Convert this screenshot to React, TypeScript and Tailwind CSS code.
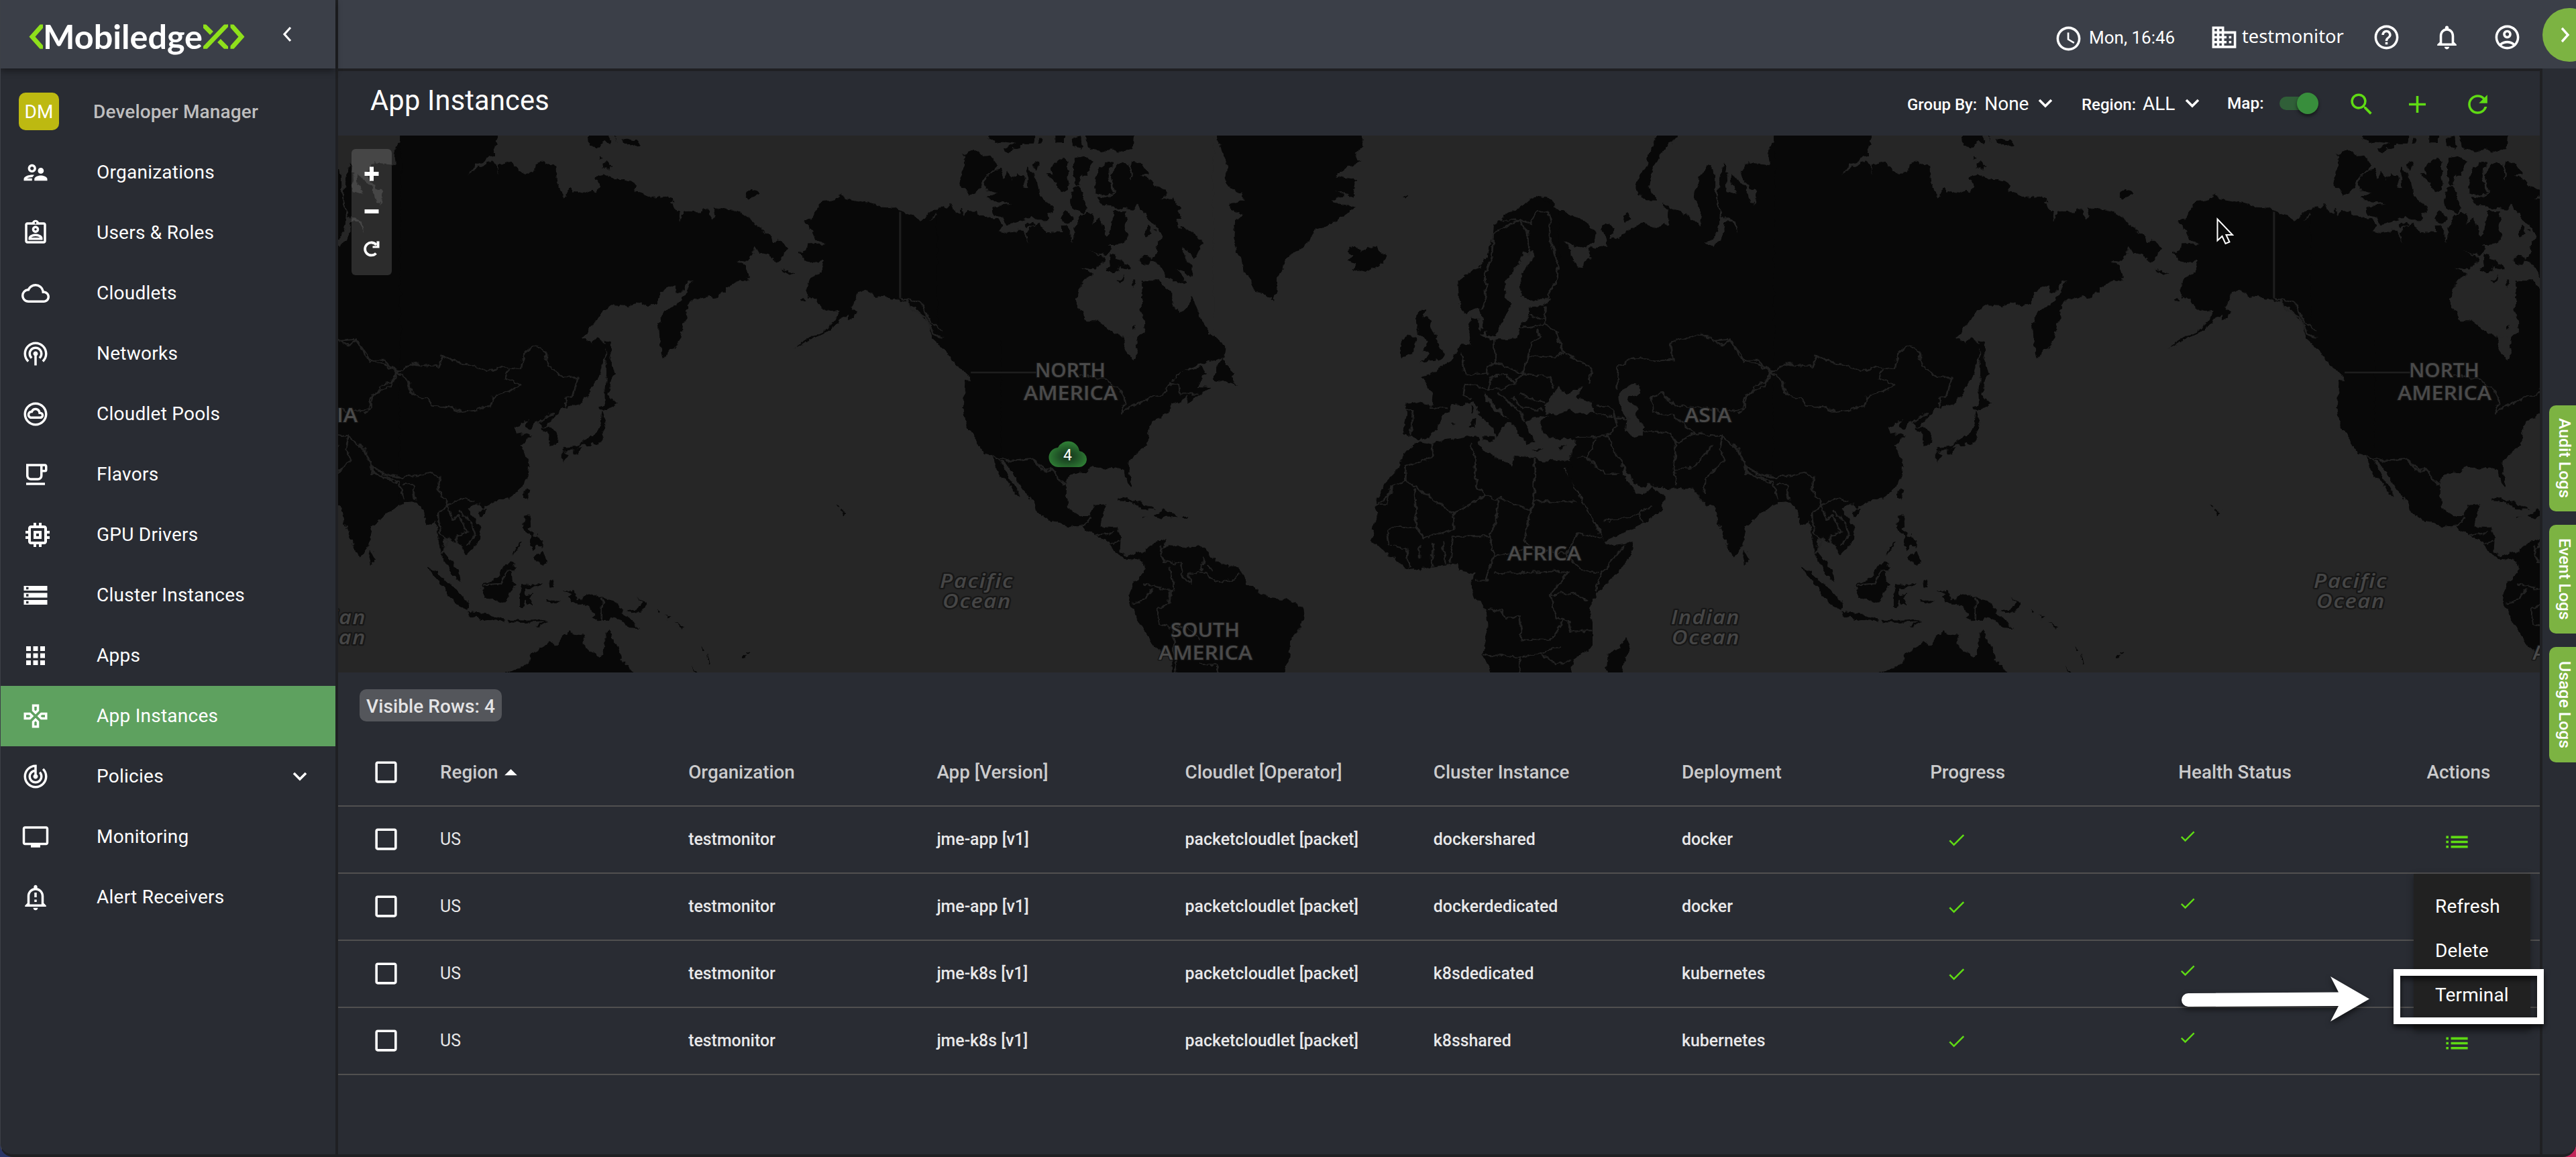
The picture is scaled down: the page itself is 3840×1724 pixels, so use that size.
import React from "react";
import {
  MdAccessTime,
  MdAdd,
  MdApps,
  MdArrowDropUp,
  MdBusiness,
  MdCheck,
  MdCheckBoxOutlineBlank,
  MdCloudQueue,
  MdHelpOutline,
  MdList,
  MdMemory,
  MdNotificationsNone,
  MdOutlineAccountCircle,
  MdOutlineAssignmentInd,
  MdOutlineCloudCircle,
  MdOutlineFreeBreakfast,
  MdOutlineGamepad,
  MdOutlineNotificationImportant,
  MdOutlineSupervisorAccount,
  MdOutlineTv,
  MdPodcasts,
  MdRefresh,
  MdSearch,
  MdStorage,
  MdTrackChanges,
} from "react-icons/md";

const LAND = "#080808";
const WATER = "#262626";

/* ---------- World map ---------- */

const eastLand = [
  "M140,-10 L345,-10 L345,28 L336,70 L320,92 L300,105 L282,133 L305,112 L335,95 L345,104 L344,138 L348,104 L372,95 L385,112 L388,125 L404,130 L422,125 L425,102 L436,98 L455,105 L468,112 L470,150 L478,180 L487,203 L497,170 L505,185 L520,180 L530,186 L545,178 L555,185 L562,170 L553,140 L570,135 L600,148 L628,152 L640,162 L636,178 L652,185 L665,200 L700,195 L715,205 L722,235 L730,245 L733,270 L738,240 L775,242 L780,232 L790,232 L800,265 L808,255 L805,230 L850,235 L880,260 L905,290 L925,310 L930,330 L945,320 L962,345 L952,362 L940,387 L920,362 L900,358 L890,340 L885,365 L878,380 L850,378 L870,392 L878,435 L860,432 L830,460 L805,488 L795,482 L760,490 L745,510 L748,545 L738,570 L735,600 L722,625 L712,635 L697,662 L690,620 L687,560 L700,525 L735,490 L762,432 L752,435 L735,470 L724,475 L722,452 L706,452 L690,475 L682,500 L668,512 L650,498 L620,508 L585,507 L568,528 L540,575 L525,597 L545,615 L555,600 L575,618 L572,650 L563,700 L545,745 L520,790 L500,795 L482,800 L455,840 L448,850 L460,855 L472,875 L470,905 L452,908 L454,880 L440,860 L440,848 L428,838 L412,862 L403,850 L413,826 L395,845 L380,852 L385,870 L415,878 L393,905 L402,925 L412,965 L410,990 L392,1030 L370,1055 L345,1064 L322,1075 L315,1087 L308,1073 L290,1078 L280,1090 L305,1130 L310,1168 L298,1190 L278,1217 L268,1190 L250,1178 L240,1168 L232,1168 L228,1205 L245,1235 L262,1262 L267,1295 L248,1280 L235,1240 L222,1205 L218,1160 L212,1120 L205,1130 L195,1136 L187,1095 L172,1068 L150,1070 L135,1075 Z",
  "M574,608 L584,612 L586,680 L596,700 L584,715 L582,745 L577,772 L573,770 L576,700 Z",
  "M572,750 L590,778 L602,788 L582,795 L578,805 L564,803 L562,795 L573,785 Z",
  "M567,806 L575,840 L567,865 L567,892 L558,903 L548,896 L540,908 L525,903 L515,915 L498,918 L482,926 L484,912 L515,908 L532,890 L540,878 L548,880 L558,862 L564,840 Z",
  "M480,925 L494,930 L488,955 L480,945 Z",
  "M505,918 L524,912 L514,930 L505,930 Z",
  "M405,1028 L411,1032 L406,1064 L399,1050 Z",
  "M306,1093 L320,1086 L318,1104 L308,1108 Z",
  "M403,1106 L416,1106 L413,1140 L422,1165 L405,1155 L398,1135 Z",
  "M415,1165 L428,1160 L438,1180 L440,1200 L430,1190 L420,1205 L412,1190 Z",
  "M420,1225 L434,1215 L440,1206 L449,1235 L445,1246 L436,1240 L428,1240 Z",
  "M393,1180 L396,1182 L380,1215 L377,1215 Z",
  "M308,1300 L325,1296 L345,1278 L362,1243 L372,1240 L388,1254 L374,1262 L376,1290 L382,1300 L372,1320 L365,1350 L350,1352 L330,1342 L318,1340 Z",
  "M195,1252 L215,1262 L235,1290 L255,1315 L275,1345 L282,1350 L280,1375 L258,1358 L235,1320 L210,1280 Z",
  "M280,1378 L310,1382 L335,1390 L360,1402 L360,1410 L320,1402 L285,1392 Z",
  "M366,1403 L385,1404 L410,1405 L448,1402 L446,1408 L405,1411 L366,1410 Z",
  "M424,1424 L436,1412 L452,1405 L445,1414 L430,1424 Z",
  "M398,1305 L410,1300 L425,1305 L438,1298 L430,1308 L402,1314 L402,1330 L420,1326 L412,1338 L420,1362 L410,1360 L405,1345 L398,1370 L392,1365 L392,1335 Z",
  "M455,1290 L464,1288 L462,1312 L457,1316 Z",
  "M450,1346 L480,1350 L470,1356 L452,1352 Z",
  "M484,1320 L508,1320 L515,1345 L528,1335 L545,1330 L570,1340 L595,1355 L610,1370 L608,1384 L622,1395 L632,1414 L645,1425 L620,1422 L600,1398 L585,1394 L578,1407 L560,1408 L545,1396 L550,1388 L535,1362 L510,1355 L495,1340 L500,1330 Z",
  "M620,1378 L640,1372 L655,1352 L662,1358 L648,1380 L630,1383 Z",
  "M640,1340 L658,1352 L655,1356 Z M680,1372 L690,1380 L686,1384 Z M700,1388 L712,1398 L708,1400 Z M722,1405 L740,1425 L735,1428 Z M776,1478 L784,1490 L780,1494 Z M790,1498 L795,1525 L792,1525 Z M755,1535 L775,1560 L768,1560 Z",
  "M350,1570 L362,1550 L385,1545 L412,1525 L415,1500 L440,1482 L455,1465 L470,1476 L478,1468 L480,1448 L498,1438 L518,1445 L532,1447 L525,1470 L538,1490 L563,1507 L570,1490 L576,1435 L580,1428 L590,1465 L600,1478 L607,1515 L622,1535 L645,1570 Z",
  "M872,195 L880,182 L892,178 L903,190 L888,198 L876,202 Z",
  "M537,-5 L540,45 L555,60 L562,52 L575,40 L583,46 L584,-5 Z M590,-5 L598,45 L594,30 Z M608,30 L640,38 L647,48 L635,56 L618,48 Z",
  "M562,78 L568,85 L562,92 Z M565,98 L580,98 L586,115 L568,116 Z M330,68 L340,72 L338,84 L328,80 Z",
  "M1074,1088 L1087,1094 L1079,1103 Z M1062,1076 L1070,1080 L1066,1082 Z M862,1505 L872,1500 L870,1512 L863,1512 Z M872,1497 L884,1492 L878,1500 Z",
  "M948,405 L960,408 L974,416 L966,420 L952,412 Z M986,488 L998,486 L1000,494 L990,494 Z",
];

const alaska =
  "M995,265 L1012,258 L1020,240 L1030,215 L1050,205 L1062,208 L1075,188 L1085,202 L1105,208 L1140,215 L1170,230 L1190,228 L1200,240 L1225,248 L1245,266 L1265,240 L1290,228 L1258,268 L1280,248 L1300,235 L1310,212 L1318,246 L1332,222 L1338,248 L1350,235 L1380,245 L1405,262 L1418,275 L1408,295 L1440,300 L1460,280 L1475,290 L1470,322 L1480,290 L1500,285 L1530,290 L1568,300 L1580,300 L1580,985 L1560,990 L1552,1010 L1552,1060 L1562,1095 L1580,1108 L1580,1138 L1560,1136 L1520,1118 L1495,1102 L1487,1075 L1470,1048 L1455,1020 L1440,985 L1428,962 L1412,946 L1420,970 L1430,1000 L1445,1025 L1455,1054 L1440,1035 L1430,1010 L1416,998 L1408,975 L1395,940 L1370,915 L1360,885 L1340,850 L1334,790 L1338,722 L1350,725 L1345,705 L1310,665 L1300,640 L1280,615 L1268,600 L1262,560 L1240,525 L1215,495 L1180,490 L1165,480 L1145,482 L1130,463 L1112,468 L1105,490 L1098,510 L1108,530 L1092,550 L1090,535 L1075,545 L1050,578 L1012,602 L975,630 L1000,603 L1045,575 L1062,548 L1070,520 L1055,525 L1032,515 L1022,490 L1008,490 L998,465 L1008,430 L1035,412 L1038,382 L1005,385 L985,355 L1000,345 L1005,332 L1042,330 L1020,320 L1012,295 Z";

const westLand = [
  "M-10,300 L15,290 L38,280 L45,322 L50,290 L80,290 L110,298 L130,285 L138,322 L142,290 L160,296 L172,262 L186,280 L192,312 L205,285 L212,330 L205,345 L172,350 L195,368 L200,400 L176,398 L160,400 L165,420 L146,440 L138,475 L138,520 L155,550 L180,565 L200,580 L225,590 L232,630 L248,662 L256,645 L254,605 L270,580 L272,545 L262,520 L265,445 L290,435 L318,450 L325,510 L340,527 L356,500 L360,485 L375,540 L385,572 L410,600 L426,622 L427,652 L395,668 L358,685 L332,705 L320,725 L345,695 L382,682 L392,700 L380,710 L372,738 L400,740 L372,765 L355,785 L350,765 L342,780 L320,790 L318,812 L300,825 L285,840 L277,862 L278,890 L270,910 L245,940 L237,960 L242,990 L245,1028 L235,1010 L230,975 L218,965 L195,972 L165,970 L150,985 L125,982 L117,1000 L115,1045 L122,1085 L140,1108 L165,1105 L172,1076 L195,1073 L190,1095 L182,1135 L215,1136 L222,1170 L220,1208 L235,1222 L252,1210 L270,1222 L270,1238 L250,1230 L235,1230 L210,1208 L203,1188 L180,1165 L160,1150 L148,1135 L120,1136 L80,1115 L60,1098 L55,1065 L30,1015 L-2,958 L-10,945 Z",
  "M400,718 L412,680 L420,655 L428,675 L445,700 L440,712 L448,735 L430,725 Z",
  "M262,1222 L280,1190 L300,1180 L312,1172 L302,1205 L318,1190 L350,1196 L385,1193 L395,1220 L425,1245 L452,1252 L465,1280 L467,1300 L490,1320 L510,1340 L545,1345 L578,1365 L582,1395 L568,1435 L553,1465 L550,1520 L536,1575 L322,1575 L320,1505 L290,1480 L272,1440 L250,1385 L238,1355 L245,1305 L255,1285 L268,1265 L266,1235 Z",
  "M214,1062 L230,1052 L255,1068 L285,1085 L292,1090 L265,1088 L245,1068 Z M286,1104 L308,1088 L335,1108 L300,1112 Z M342,1107 L353,1107 L350,1113 L343,1112 Z M262,1107 L274,1109 L266,1113 Z",
  "M407,-5 L412,40 L422,70 L430,110 L428,145 L435,170 L455,188 L465,205 L452,215 L436,215 L438,235 L462,245 L445,265 L442,310 L450,355 L458,375 L462,410 L480,440 L485,470 L505,475 L520,493 L528,460 L528,430 L540,405 L545,370 L575,345 L592,320 L605,287 L640,272 L665,245 L680,225 L648,218 L632,205 L660,195 L640,180 L678,200 L682,150 L640,140 L662,115 L690,95 L678,75 L697,50 L690,25 L700,-5 Z",
  "M665,345 L680,340 L690,352 L705,345 L722,335 L725,350 L740,365 L735,385 L715,400 L700,412 L675,402 L682,385 L665,378 L680,368 L668,358 Z",
  "M795,545 L808,522 L820,518 L812,540 L828,545 L825,570 L838,590 L842,620 L855,645 L848,660 L825,662 L805,672 L825,648 L808,638 L820,622 L818,600 L802,590 L800,570 Z",
  "M768,612 L782,590 L797,598 L798,630 L790,645 L770,656 L765,640 Z",
  "M1035,195 L1055,198 L1070,215 L1068,235 L1085,235 L1100,248 L1130,270 L1148,300 L1146,325 L1130,343 L1110,338 L1085,320 L1100,350 L1102,375 L1120,402 L1125,380 L1138,375 L1135,345 L1152,340 L1170,340 L1168,315 L1160,280 L1175,272 L1185,285 L1175,315 L1195,315 L1208,295 L1225,285 L1240,270 L1258,285 L1290,275 L1290,240 L1278,215 L1300,235 L1320,242 L1340,265 L1352,280 L1355,245 L1340,195 L1352,135 L1365,108 L1380,125 L1380,190 L1390,245 L1388,290 L1375,322 L1357,330 L1378,338 L1395,310 L1402,262 L1415,270 L1425,305 L1420,268 L1408,255 L1395,255 L1384,200 L1386,180 L1392,130 L1398,100 L1405,140 L1402,182 L1425,190 L1412,160 L1410,130 L1440,170 L1458,225 L1460,185 L1440,160 L1432,130 L1440,100 L1488,105 L1485,60 L1495,42 L1515,25 L1530,-10 L1572,-10 L1572,900 L1550,1060 L1520,1068 L1495,1070 L1470,1100 L1438,1140 L1438,1180 L1418,1223 L1402,1185 L1388,1130 L1382,1080 L1362,1075 L1350,1055 L1338,1028 L1300,1032 L1265,1022 L1250,1012 L1245,1030 L1225,1015 L1215,990 L1200,968 L1203,990 L1225,1038 L1240,1045 L1250,1035 L1258,1022 L1285,1058 L1272,1095 L1240,1128 L1190,1162 L1165,1180 L1155,1140 L1130,1085 L1115,1040 L1095,995 L1090,970 L1098,950 L1108,892 L1090,885 L1070,888 L1045,870 L1040,838 L1055,820 L1030,828 L1012,835 L1018,860 L1030,895 L1015,905 L1005,885 L990,855 L975,825 L958,798 L940,770 L928,752 L935,775 L950,805 L985,838 L965,850 L962,870 L955,885 L950,855 L925,825 L910,780 L890,790 L868,788 L862,805 L845,830 L840,860 L825,880 L800,892 L790,878 L772,870 L780,820 L778,785 L800,783 L830,792 L832,760 L808,712 L830,702 L845,685 L868,660 L885,620 L905,620 L900,580 L905,540 L920,545 L922,590 L940,605 L995,598 L1002,560 L1018,540 L1018,512 L1045,508 L1060,490 L1040,300 Z",
  "M1035,195 L1020,205 L1000,230 L975,240 L965,262 L950,275 L948,310 L935,370 L920,400 L895,420 L880,440 L882,500 L895,532 L915,512 L922,515 L928,560 L938,598 L955,590 L965,555 L985,505 L970,480 L972,440 L985,415 L1000,380 L1008,355 L1025,352 L1028,372 L1010,405 L1000,430 L1002,480 L1020,495 L1060,485 L1078,425 L1075,235 Z",
  "M925,570 L935,575 L930,590 L920,585 Z M905,832 L914,830 L912,855 L904,852 Z M906,790 L912,800 L908,815 Z M930,880 L952,882 L948,895 L930,888 Z M1022,915 L1045,915 L1035,922 Z M1075,912 L1092,905 L1080,920 Z M867,842 L875,840 L872,846 Z",
  "M1268,20 L1308,25 L1290,50 L1272,80 L1258,120 L1252,160 L1260,190 L1270,208 L1245,207 L1230,190 L1226,170 L1235,130 L1248,110 L1250,85 Z M1270,-5 L1310,-5 L1306,28 L1268,24 Z",
  "M1200,252 L1212,245 L1216,260 L1205,270 Z M1364,108 L1372,108 L1370,124 L1362,120 Z M774,198 L782,192 L778,204 Z",
  "M795,900 L805,894 L828,902 L850,890 L880,885 L905,878 L922,882 L918,905 L930,922 L955,940 L985,965 L992,935 L1020,940 L1050,950 L1080,948 L1095,952 L1102,968 L1085,970 L1100,1005 L1118,1060 L1140,1115 L1160,1165 L1170,1192 L1222,1182 L1215,1220 L1190,1270 L1150,1325 L1135,1370 L1142,1410 L1142,1480 L1105,1518 L1098,1575 L950,1575 L928,1500 L938,1430 L935,1372 L912,1335 L905,1300 L912,1270 L882,1262 L880,1243 L850,1247 L785,1262 L765,1240 L735,1205 L712,1175 L715,1140 L722,1110 L720,1065 L738,1010 L765,970 L775,930 Z",
  "M1208,1450 L1216,1475 L1205,1520 L1196,1575 L1168,1575 L1172,1498 L1190,1488 Z",
  "M1438,1202 L1449,1230 L1446,1243 L1437,1246 L1434,1225 Z",
];

const arcticLand = [
  "M-10,340 L15,325 L40,330 L50,308 L75,350 L90,362 L100,325 L112,360 L130,342 L165,345 L195,365 L235,382 L265,385 L280,408 L265,430 L310,438 L360,428 L385,440 L400,492 L392,435 L420,405 L440,400 L480,435 L550,438 L548,410 L570,402 L585,430 L598,480 L605,420 L625,395 L620,370 L655,350 L690,355 L695,400 L712,370 L730,400 L742,455 L765,440 L775,400 L778,345 L830,345 L845,375 L828,405 L845,455 L820,490 L790,495 L752,495 L772,515 L745,545 L672,518 L742,552 L725,585 L695,607 L632,595 L690,622 L650,650 L625,690 L615,735 L618,780 L640,790 L655,835 L700,835 L735,855 L780,890 L820,900 L820,915 L-10,915 Z",
  "M770,530 L760,560 L765,590 L748,605 L780,625 L810,590 L840,610 L858,600 L835,580 L800,555 Z",
  "M105,88 L155,75 L200,98 L230,95 L262,140 L215,185 L190,215 L180,250 L135,272 L120,245 L85,225 L100,185 L115,130 Z",
  "M205,235 L215,190 L250,160 L280,152 L285,192 L310,170 L325,200 L345,185 L345,168 L375,190 L382,235 L398,242 L388,150 L415,165 L435,200 L450,275 L510,325 L505,345 L480,350 L492,385 L440,385 L415,365 L385,385 L300,405 L290,375 L240,360 L235,330 L260,320 L322,315 L290,300 L225,297 L215,280 L265,258 L210,245 Z",
  "M408,130 L425,122 L446,130 L438,165 L420,145 Z",
  "M480,170 L512,182 L500,145 L530,120 L562,108 L578,125 L572,175 L583,235 L548,262 L520,215 L495,195 Z",
  "M610,105 L640,100 L690,120 L660,185 L635,185 L622,230 L605,220 L600,190 L600,130 Z",
  "M700,200 L715,150 L750,122 L782,125 L760,150 L755,190 L768,230 L780,262 L745,278 L700,262 Z",
  "M590,260 L615,232 L640,260 L660,330 L640,352 L600,335 L585,300 Z",
  "M540,380 L565,340 L600,375 L585,402 Z M380,408 L420,388 L425,400 L390,420 Z",
  "M770,180 L785,145 L820,125 L850,135 L862,200 L870,185 L855,125 L910,130 L932,180 L895,180 L950,205 L955,235 L1005,245 L1015,270 L990,290 L1050,290 L1060,315 L1085,330 L1065,345 L1085,372 L1060,375 L1070,410 L1130,435 L1182,485 L1165,520 L1145,555 L1110,520 L1080,500 L1100,550 L1130,590 L1128,642 L1095,612 L1060,602 L1112,668 L1080,668 L1020,640 L985,580 L945,565 L980,525 L965,505 L1000,455 L985,420 L930,370 L885,310 L870,338 L800,330 L730,315 L705,280 L745,285 L785,265 L785,245 L775,215 Z",
  "M915,440 L925,415 L945,415 L950,445 L925,460 Z M898,565 L910,545 L950,548 L940,580 L905,582 Z M800,655 L830,632 L825,655 L810,662 Z M865,658 L877,660 L870,684 L864,675 Z M955,425 L975,425 L970,435 Z M868,868 L885,852 L880,868 Z",
  "M905,652 L940,655 L980,655 L1010,690 L1045,710 L1045,770 L1080,800 L1115,770 L1128,725 L1150,770 L1175,830 L1228,915 L890,915 L920,885 L925,840 L895,785 L910,745 Z",
  "M222,-10 L228,25 L250,35 L300,35 L345,42 L285,62 L290,80 L320,78 L375,45 L420,44 L430,-10 Z M445,20 L460,20 L458,42 L445,38 Z M520,-10 L562,-10 L560,40 L520,40 Z M590,25 L630,5 L636,66 L600,55 Z M655,-10 L662,55 L690,70 L735,74 L760,70 L830,76 L865,65 L872,-10 Z",
];

const innerWater = [
  "M1058,770 L1075,738 L1082,752 L1092,760 L1105,748 L1125,735 L1118,755 L1108,768 L1140,785 L1150,815 L1115,812 L1095,805 L1075,818 L1052,815 L1048,795 Z",
  "M1205,745 L1215,730 L1236,735 L1235,758 L1215,765 L1212,780 L1232,800 L1225,820 L1240,850 L1240,876 L1222,882 L1206,865 L1208,830 L1195,795 L1192,765 Z",
];

const eastBorders =
  "M6,608 L42,604 L75,665 L95,668 L132,698 L165,672 L220,682 L228,650 L250,665 L290,680 L325,695 L355,680 L395,685 L402,640 L425,620 L440,628 L455,680 L485,712 L515,712 L505,765 L488,770 L490,795 M132,698 L158,725 L162,760 L195,775 L205,795 L245,798 L275,812 L330,795 L335,768 L370,750 L395,735 L362,712 L370,685 M132,698 L120,728 L95,735 L92,760 L75,770 L75,800 L60,815 M430,840 L468,812 M440,855 L460,850 M75,965 L100,985 L140,1000 L150,992 L170,995 L205,985 L222,1000 L218,1035 L232,1060 L240,1075 L280,1055 L292,1068 M75,965 L80,985 L135,1012 L145,1060 M145,1015 L165,1018 L170,1060 M240,1075 L218,1100 L222,1155 L240,1180 L225,1215 M240,1075 L248,1115 L262,1105 L280,1155 L258,1160 L258,1185 M262,1090 L290,1130 L298,1160 L280,1190 M312,1303 L350,1300 L365,1265 L385,1262 M567,1340 L567,1405";
const straightEast = "M1200,240 L1200,485 M1350,698 L1490,698";
const eastBordersNA =
  "M1200,485 L1245,500 L1265,555 L1288,580 M1212,488 L1228,520 L1255,540 L1272,590 L1290,600 M1395,938 L1440,950 L1480,945 L1500,975 L1520,972 L1552,1018";
const westBorders =
  "M140,705 L190,715 L222,745 L232,775 L225,812 L245,795 L285,765 L305,762 L320,728 L338,735 L340,760 L372,760 M0,950 L25,950 L50,945 L78,978 L95,980 L105,1010 L115,1018 M148,1135 L165,1110 M175,1160 L210,1155 M205,1188 L220,1180 M300,1190 L305,1235 L340,1245 L345,1285 L360,1300 L355,1268 L392,1270 L400,1290 L418,1295 L440,1290 L455,1270 M268,1300 L320,1318 L318,1355 L295,1370 L300,1415 L325,1430 L330,1568 M245,1355 L265,1350 L285,1315 M320,1250 L325,1318 M385,1225 L380,1265 M390,1245 L400,1260 M375,1530 L412,1530 L412,1568 M320,1420 L355,1425 L380,1460 M1000,262 L1015,300 L1018,360 M965,265 L1000,262 L1020,275 L1035,240 L1055,240 L1060,270 L1058,310 L1075,400 L1072,435 L1050,490 M1000,262 L950,300 L945,370 L932,420 L935,480 L925,520 M1050,510 L1048,560 L1020,570 L1000,570 M1020,535 L1048,545 M1048,560 L1070,580 L1085,640 L1070,655 L1018,650 L1022,610 L1040,600 L1035,575 M950,600 L952,670 L1005,700 L1018,650 M885,640 L895,705 L940,700 L935,680 L952,670 M1085,640 L1140,685 L1135,730 M1005,700 L1060,710 L1065,740 M895,730 L940,745 L945,710 L975,705 L990,730 L965,745 L940,745 M990,730 L1005,700 M1000,760 L1050,785 M960,755 L985,790 L1005,820 L1010,835 M985,770 L1005,800 L1045,805 M778,805 L792,805 L788,875 M825,795 L860,800 M895,730 L890,760 L905,775 M1150,790 L1185,805 L1190,850 L1170,880 L1110,882 M1150,815 L1180,825 L1215,830 M1190,745 L1190,685 L1225,655 L1265,668 L1298,662 L1295,612 L1355,588 L1395,620 L1410,605 L1438,665 L1465,665 L1490,698 L1530,668 L1568,685 M1490,698 L1475,735 L1442,765 L1435,800 L1400,812 L1345,795 L1305,795 L1275,755 L1258,765 L1260,812 M1240,865 L1290,870 L1305,895 L1300,975 L1308,1020 M1260,812 L1300,820 L1340,870 L1305,900 M1340,870 L1395,880 L1425,915 L1440,965 L1470,990 L1510,1000 L1530,990 L1560,985 M1440,965 L1442,985 L1500,1012 L1505,1060 M1395,880 L1390,915 L1400,945 L1362,1000 L1360,1040 M1300,975 L1340,965 L1375,905 M1490,698 L1518,725 L1525,760 L1568,795 M1170,880 L1190,935 L1205,975 M1110,940 L1130,940 L1165,985 L1195,985 M1130,940 L1150,885 M1165,1120 L1200,1115 L1232,1100 L1240,1125 M1232,1100 L1255,1080 M830,900 L830,940 L778,965 L778,1005 L870,1100 L932,1048 L915,1020 L912,930 L905,900 M778,1005 L752,1020 L750,1045 L720,1075 L742,1075 L750,1020 M795,1030 L800,1140 L755,1140 L740,1150 M870,1100 L872,1145 L810,1170 L800,1140 M932,1048 L958,1060 L955,1120 L942,1165 L870,1165 L865,1240 M958,1055 L1022,1090 L1028,1065 L1028,945 M1028,1065 L1112,1066 M1022,1090 L1010,1170 L1020,1200 L1090,1215 L1115,1155 L1160,1170 M942,1165 L950,1220 L935,1290 L912,1290 M950,1220 L1010,1205 M1090,1215 L1120,1260 L1155,1268 M1205,1190 L1160,1268 L1148,1320 M950,1270 L1070,1265 L1095,1268 L1060,1330 L1070,1395 L1095,1410 L1100,1435 L1140,1435 M938,1375 L965,1378 L975,1400 L1000,1390 L1005,1460 L1060,1460 L1085,1405 M930,1502 L1000,1508 L1040,1500 L1080,1480 M1000,1508 L1000,1568 M1040,1500 L1070,1530 L1100,1515 M1062,1330 L1105,1325 L1135,1350 M805,1190 L805,1230 M830,1185 L830,1250 M850,1175 L855,1245 M740,1150 L745,1190 L780,1200 L785,1255";

const EAST = "translate(-4 -12) scale(0.70153 0.52296)";
const WEST = "translate(996 -12) scale(0.76531 0.52296)";
const ARCTIC = "translate(896 -2) scale(0.33333)";

const mapLabels = [
  { text: "NORTH", x: 1039, y: 360, w: 105 },
  { text: "AMERICA", x: 1022, y: 394, w: 140 },
  { text: "ASIA", x: 2007, y: 427, w: 70 },
  { text: "AFRICA", x: 1743, y: 633, w: 110 },
  { text: "SOUTH", x: 1241, y: 747, w: 103 },
  { text: "AMERICA", x: 1223, y: 781, w: 140 },
  { text: "Indian", x: 1987, y: 728, w: 103, italic: true },
  { text: "Ocean", x: 1988, y: 758, w: 102, italic: true },
  { text: "Pacific", x: 897, y: 674, w: 110, italic: true },
  { text: "Ocean", x: 901, y: 704, w: 103, italic: true },
];

function World({ offset }: { offset: number }) {
  const visible = mapLabels.filter((l) => l.x + l.w + offset > 0 && l.x + offset < 3282);
  return (
    <g transform={`translate(${offset} 0)`}>
      <g filter="url(#coast)">
        <g transform={EAST}>
          {[...eastLand, alaska].map((d, i) => (
            <path key={i} d={d} fill={LAND} />
          ))}
          <path d={eastBorders} fill="none" stroke="#232323" strokeWidth={3.8} strokeLinejoin="round" />
        </g>
        <g transform={WEST}>
          {westLand.map((d, i) => (
            <path key={i} d={d} fill={LAND} />
          ))}
          {innerWater.map((d, i) => (
            <path key={i} d={d} fill={WATER} />
          ))}
        </g>
        <g transform={ARCTIC}>
          <rect x="0" y="-10" width="1225" height="915" fill={WATER} />
          {arcticLand.map((d, i) => (
            <path key={i} d={d} fill={LAND} />
          ))}
        </g>
        <path transform={WEST} d={westBorders} fill="none" stroke="#232323" strokeWidth={3.6} strokeLinejoin="round" />
        <path transform={EAST} d={eastBordersNA} fill="none" stroke="#232323" strokeWidth={3.8} strokeLinejoin="round" />
      </g>
      <path d={straightEast} transform={EAST} fill="none" stroke="#1e1e1e" strokeWidth={4.5} />
      {visible.map((l, i) => (
        <text
          key={i}
          x={l.x}
          y={l.y}
          textLength={l.w}
          lengthAdjust="spacingAndGlyphs"
          letterSpacing={l.italic ? 1.5 : 0}
          fill={l.italic ? "#464646" : "#4a4a4a"}
          stroke={l.italic ? "#171717" : "#141414"}
          strokeWidth={l.italic ? 4.5 : 2.5}
          strokeLinejoin="round"
          paintOrder="stroke"
          fontSize={28.5}
          fontStyle={l.italic ? "italic" : "normal"}
          fontWeight={600}
          fontFamily="'Open Sans', 'Noto Sans', sans-serif"
        >
          {l.text}
        </text>
      ))}
    </g>
  );
}

function WorldMap() {
  return (
    <div className="relative h-[800px] shrink-0 overflow-hidden bg-[#262626]">
      <svg width="3282" height="800" viewBox="0 0 3282 800" className="block">
        <defs>
          <filter
            id="coast"
            filterUnits="userSpaceOnUse"
            x="-20"
            y="-20"
            width="2260"
            height="840"
            colorInterpolationFilters="sRGB"
          >
            <feTurbulence type="fractalNoise" baseFrequency="0.1" numOctaves={3} seed={4} result="n" />
            <feDisplacementMap in="SourceGraphic" in2="n" scale={9} xChannelSelector="R" yChannelSelector="G" />
          </filter>
          <radialGradient id="cluster" cx="50%" cy="58%" r="55%">
            <stop offset="0%" stopColor="#14301a" />
            <stop offset="45%" stopColor="#1f5226" />
            <stop offset="100%" stopColor="#2f7f35" />
          </radialGradient>
        </defs>
        <World offset={-2048} />
        <World offset={0} />
        <World offset={2048} />
        <g>
          <path
            d="M1075 494 h29 a12 12 0 0 0 12 -12 a13 13 0 0 0 -11 -12 a17 17 0 0 0 -32 -5 a14.500 14.500 0 0 0 2 29 z"
            fill="url(#cluster)"
          />
          <text x="1087.500" y="484" textAnchor="middle" fontSize="23" fill="#fff" fontFamily="Roboto, sans-serif">4</text>
        </g>
        <path
          d="M2801.500 124.500 v32 l7 -6.500 l5 11 l6 -2.500 l-5 -10.500 h9.500 z"
          fill="#0a0a0a"
          stroke="#fff"
          strokeWidth="2"
        />
      </svg>
      <div className="absolute left-5 top-5 flex h-[188px] w-[60px] flex-col items-center rounded-md bg-white/15 pt-[23px] text-white">
        <svg width="28" height="28" viewBox="0 0 28 28"><path d="M14 3.500v21M3.500 14h21" stroke="#fff" strokeWidth="6" /></svg>
        <svg width="28" height="28" viewBox="0 0 28 28" className="mt-[28px]"><path d="M3.500 14h21" stroke="#fff" strokeWidth="6" /></svg>
        <svg width="28" height="28" viewBox="0 0 28 28" className="mt-7">
          <path d="M20.500 20.500 A9.500 9.500 0 1 1 21 8" fill="none" stroke="#fff" strokeWidth="3.800" />
          <path d="M25.500 2.500 V12.500 H15.500 V9.500 H21.500 V2.500 Z" fill="#fff" />
        </svg>
      </div>
    </div>
  );
}

/* ---------- Sidebar ---------- */

const nav = [
  { label: "Organizations", icon: MdOutlineSupervisorAccount },
  { label: "Users & Roles", icon: MdOutlineAssignmentInd },
  { label: "Cloudlets", icon: MdCloudQueue },
  { label: "Networks", icon: MdPodcasts },
  { label: "Cloudlet Pools", icon: MdOutlineCloudCircle },
  { label: "Flavors", icon: MdOutlineFreeBreakfast },
  { label: "GPU Drivers", icon: MdMemory, big: true },
  { label: "Cluster Instances", icon: MdStorage },
  { label: "Apps", icon: MdApps },
  { label: "App Instances", icon: MdOutlineGamepad, active: true },
  { label: "Policies", icon: MdTrackChanges, expandable: true },
  { label: "Monitoring", icon: MdOutlineTv },
  { label: "Alert Receivers", icon: MdOutlineNotificationImportant },
];

function Chevron({ className }: { className?: string }) {
  return (
    <svg width="22" height="14" viewBox="0 0 22 14" className={className}>
      <path d="M2 2l9 9 9-9" fill="none" stroke="#fff" strokeWidth="3.600" />
    </svg>
  );
}

function Logo() {
  return (
    <svg width="324" height="64" viewBox="0 0 324 64">
      <defs>
        <clipPath id="brackets">
          <rect x="0" y="5.600" width="21" height="36.200" />
          <rect x="260" y="5.600" width="37" height="36.200" />
          <rect x="300.500" y="5.600" width="21" height="36.200" />
        </clipPath>
      </defs>
      <g fill="none" stroke="#8fe01b" strokeWidth="6.800" clipPath="url(#brackets)">
        <path d="M26 0L5 23.700L26 47.400" />
        <path d="M256 2L272.500 18.500M283.500 29.500L301 47" />
        <path d="M301 0L256 47" />
        <path d="M296 0L317 23.700L296 47.400" />
      </g>
      <text
        x="21"
        y="41.500"
        textLength="238"
        lengthAdjust="spacingAndGlyphs"
        fontSize="49.500"
        fontWeight="700"
        fill="#fff"
        fontFamily="Lato, sans-serif"
      >
        Mobiledge
      </text>
    </svg>
  );
}

function Sidebar() {
  return (
    <aside className="flex w-[504px] shrink-0 flex-col border-r-4 border-[#1f2023] bg-[#292c33]">
      <div className="z-10 flex h-[102px] shrink-0 items-start bg-[#3b3f48] pl-[43px] pt-[31px] shadow-[0_4px_10px_rgba(0,0,0,0.4)]">
        <Logo />
        <svg width="14" height="24" viewBox="0 0 14 24" className="ml-[54px] mt-2">
          <path d="M12 2L3 12l9 10" fill="none" stroke="#fff" strokeWidth="3.200" />
        </svg>
      </div>
      <div className="flex h-[110px] shrink-0 items-center pb-2 pl-7 pt-[26px]">
        <div className="flex h-14 w-[60px] items-center justify-center rounded-[10px] bg-[#bdb911] text-[28px] text-white">
          DM
        </div>
        <div className="ml-[51px] text-[28px] font-medium tracking-[0.15px] text-[#bebebf]">Developer Manager</div>
      </div>
      <nav className="flex flex-col">
        {nav.map(({ label, icon: Icon, big, active, expandable }) => (
          <div
            key={label}
            className={
              active
                ? "flex h-[90px] items-center bg-[#5ea15f] pl-8 text-white"
                : "flex h-[90px] items-center pl-8 text-white"
            }
          >
            <div className="flex w-[112px] items-center">
              <Icon size={big ? 48 : 42} />
            </div>
            <span className="pb-0.5 text-[28px] tracking-[0.25px]">{label}</span>
            {expandable && <Chevron className="ml-auto mr-[42px]" />}
          </div>
        ))}
      </nav>
    </aside>
  );
}

/* ---------- Top bar ---------- */

function TopBar() {
  return (
    <header className="relative flex h-[102px] shrink-0 items-center overflow-hidden bg-[#3b3f48] pl-[2558px] text-white">
      <MdAccessTime size={43} className="mt-[12px]" />
      <span className="ml-[9px] w-[180px] pt-2.5 text-[26px]">Mon, 16:46</span>
      <MdBusiness size={43} className="mt-2" />
      <span className="ml-[5px] w-[194px] whitespace-nowrap pt-1.5 font-['Noto_Sans','Open_Sans',sans-serif] text-[27.3px]">
        testmonitor
      </span>
      <MdHelpOutline size={43} className="mt-2 shrink-0" />
      <MdNotificationsNone size={43} className="ml-[47px] mt-2 shrink-0" />
      <MdOutlineAccountCircle size={43} className="ml-[47px] mt-2 shrink-0" />
      <div className="absolute left-[3286px] top-3 flex h-20 w-20 items-center rounded-full bg-[#7cb342] pl-[27px]">
        <svg width="14" height="24" viewBox="0 0 14 24">
          <path d="M2 2l9 10-9 10" fill="none" stroke="#fff" strokeWidth="3.400" />
        </svg>
      </div>
    </header>
  );
}

/* ---------- Content ---------- */

function Toolbar() {
  return (
    <div className="flex h-24 shrink-0 items-center pl-12 text-white">
      <h1 className="w-[2291px] pb-2 text-[41.6px] leading-none tracking-[0.2px]">App Instances</h1>
      <div className="flex w-[260px] items-baseline whitespace-nowrap">
        <span className="text-[24px] font-medium">Group By:</span>
        <span className="ml-[11px] w-[80px] text-[28px]">None</span>
        <Chevron className="self-center" />
      </div>
      <div className="flex w-[217px] items-baseline whitespace-nowrap">
        <span className="w-[91px] text-[24px] font-medium">Region:</span>
        <span className="w-[63px] text-[28px]">ALL</span>
        <Chevron className="self-center" />
      </div>
      <span className="w-[78px] text-[24.4px] font-medium">Map:</span>
      <div className="flex h-5 w-[50px] items-center justify-end rounded-full bg-[#305f38]">
        <div className="-mr-2 h-8 w-8 shrink-0 rounded-full bg-[#388e3c] shadow-[0_3px_5px_rgba(0,0,0,0.5)]" />
      </div>
      <div className="flex items-center pl-[51px] pt-0.5 text-[#5fdb14]">
        <MdSearch size={43} />
        <MdAdd size={43} className="ml-10" />
        <MdRefresh size={43} className="ml-[47px]" />
      </div>
    </div>
  );
}

const columns = ["Region", "Organization", "App [Version]", "Cloudlet [Operator]", "Cluster Instance", "Deployment", "Progress", "Health Status", "Actions"];

const rows = [
  ["US", "testmonitor", "jme-app [v1]", "packetcloudlet [packet]", "dockershared", "docker"],
  ["US", "testmonitor", "jme-app [v1]", "packetcloudlet [packet]", "dockerdedicated", "docker"],
  ["US", "testmonitor", "jme-k8s [v1]", "packetcloudlet [packet]", "k8sdedicated", "kubernetes"],
  ["US", "testmonitor", "jme-k8s [v1]", "packetcloudlet [packet]", "k8sshared", "kubernetes"],
];

const gridRow = "grid h-[100px] grid-cols-[103px_repeat(8,370.2px)_1fr] items-center border-b-2 border-[#515050] pl-[49px] whitespace-nowrap";

function Table() {
  return (
    <div>
      <div className={gridRow + " mt-[2px] text-[27.8px] font-medium text-[#cbcbcc]"}>
        <MdCheckBoxOutlineBlank size={43} className="mb-0.5 ml-[0.5px] text-white" />
        {columns.map((c, i) => (
          <div key={c} className="flex items-center">
            {c}
            {i === 0 && <MdArrowDropUp size={45} className="-ml-[3px] text-white" />}
          </div>
        ))}
      </div>
      {rows.map((r, ri) => (
        <div key={ri} className={gridRow + " pb-0.5 text-[24.9px] text-[#e8e8e9]"}>
          <MdCheckBoxOutlineBlank size={43} className="ml-[0.5px] text-white" />
          {r.map((c, i) => (
            <div key={i} className={i === 0 ? "pt-0.5" : "pt-0.5 font-medium"}>{c}</div>
          ))}
          <div className="pl-6 pt-0.5 text-[#5fdb14]"><MdCheck size={31} /></div>
          <div className="pb-2 text-[#5fdb14]"><MdCheck size={28} /></div>
          <div className="pl-[23px] pt-2 text-[#5fdb14]"><MdList size={43} /></div>
        </div>
      ))}
    </div>
  );
}

function ActionMenu() {
  return (
    <div className="absolute left-[3094px] top-[1200px] flex h-[232px] w-[174px] flex-col bg-[#212121] pl-[32px] pt-[15px] text-[28px] text-white shadow-[0_4px_10px_rgba(0,0,0,0.35)]">
      {["Refresh", "Delete", "Terminal"].map((t) => (
        <div key={t} className="flex h-[66px] items-center tracking-[0.15px]">{t}</div>
      ))}
    </div>
  );
}

function Callout() {
  return (
    <>
      <div className="absolute left-[3064px] top-[1342px] h-[82px] w-[224px] border-[10px] border-white drop-shadow-[0_5px_4px_rgba(0,0,0,0.7)]" />
      <svg
        width="290"
        height="80"
        viewBox="0 0 290 80"
        className="absolute left-[2744px] top-[1347px] drop-shadow-[0_4px_4px_rgba(0,0,0,0.6)]"
      >
        <path d="M14 31 L238 29.500 L226 6 L284 39.500 L226 73 L238 50 L14 51 A10 10 0 0 1 14 31 Z" fill="#fff" />
      </svg>
    </>
  );
}

function SideTab({ label, className }: { label: string; className: string }) {
  return (
    <div
      className={
        "flex w-10 items-center justify-center rounded-l-[10px] bg-[#7cb342] pl-1 text-[24.8px] font-medium text-white [writing-mode:vertical-rl] " +
        className
      }
    >
      {label}
    </div>
  );
}

export default function App() {
  return (
    <div className="h-[1724px] w-[3840px] overflow-hidden bg-[linear-gradient(90deg,#2a3566_0%,#2a3566_50%,#c2265a_50%,#c2265a_100%)] font-[Roboto,sans-serif] leading-tight">
      <div className="flex h-full w-full overflow-hidden rounded-b-[20px] border-b-4 border-l border-b-[#1f2023] border-l-[#3d4047] bg-[#292c33]">
        <div className="-ml-px flex h-full w-[3840px] shrink-0">
          <Sidebar />
          <div className="flex w-[3336px] flex-col">
            <TopBar />
            <div className="relative flex min-h-0 flex-1">
              <main className="flex w-[3286px] shrink-0 flex-col border-r-4 border-t-4 border-[#1f2023] bg-[#292c33]">
                <Toolbar />
                <WorldMap />
                <div className="flex h-[98px] shrink-0 items-center pl-8">
                  <div className="flex h-12 w-[212px] items-center justify-center rounded-[10px] bg-[#54565b] pt-0.5 text-[28px] font-medium tracking-[0.1px] text-[#e4e4e5]">
                    Visible Rows: 4
                  </div>
                </div>
                <Table />
              </main>
              <div className="flex flex-1 flex-col items-end pt-[502px]">
                <SideTab label="Audit Logs" className="h-[158px]" />
                <SideTab label="Event Logs" className="mt-5 h-[162px]" />
                <SideTab label="Usage Logs" className="mt-5 h-[172px]" />
              </div>
              <ActionMenu />
              <Callout />
            </div>
          </div>
        </div>
      </div>
    </div>
  );
}
